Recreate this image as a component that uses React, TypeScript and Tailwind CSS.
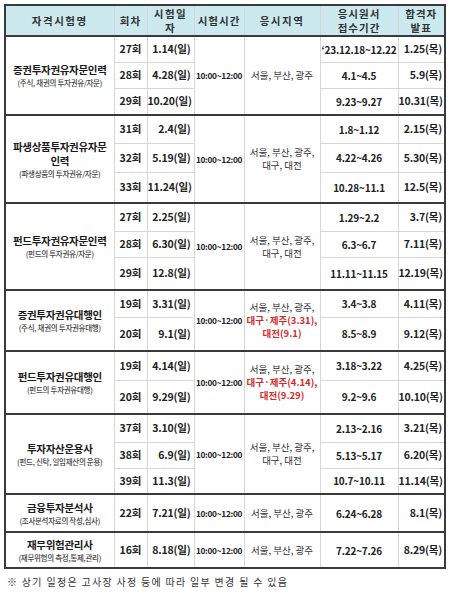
import React from "react";

type Row = { r: string; d: string; a: string; p: string; h: number };
type Group = {
  name: React.ReactNode;
  sub: string;
  region: React.ReactNode;
  rows: Row[];
};

const font = { fontFamily: '"Noto Sans CJK KR", "Noto Sans", sans-serif' };

const R3 = (
  <div className="leading-[13px]">
    <div>서울, 부산, 광주,</div>
    <div>대구, 대전</div>
  </div>
);
const R1 = <div className="leading-[13px]">서울, 부산, 광주</div>;

const redRegion = (a: string, b: string) => (
  <div className="leading-[13px]">
    <div>서울, 부산, 광주,</div>
    <div className="text-[#d42a2a] font-semibold">{a}</div>
    <div className="text-[#d42a2a] font-semibold">{b}</div>
  </div>
);

const groups: Group[] = [
  {
    name: "증권투자권유자문인력",
    sub: "(주식, 채권의 투자권유/자문)",
    region: R1,
    rows: [
      { r: "27회", d: "1.14(일)", a: "\u201823.12.18~12.22", p: "1.25(목)", h: 26 },
      { r: "28회", d: "4.28(일)", a: "4.1~4.5", p: "5.9(목)", h: 26 },
      { r: "29회", d: "10.20(일)", a: "9.23~9.27", p: "10.31(목)", h: 27 },
    ],
  },
  {
    name: (
      <>
        <div>파생상품투자권유자문</div>
        <div>인력</div>
      </>
    ),
    sub: "(파생상품의 투자권유/자문)",
    region: R3,
    rows: [
      { r: "31회", d: "2.4(일)", a: "1.8~1.12", p: "2.15(목)", h: 28 },
      { r: "32회", d: "5.19(일)", a: "4.22~4.26", p: "5.30(목)", h: 29 },
      { r: "33회", d: "11.24(일)", a: "10.28~11.1", p: "12.5(목)", h: 31 },
    ],
  },
  {
    name: "펀드투자권유자문인력",
    sub: "(펀드의 투자권유/자문)",
    region: R3,
    rows: [
      { r: "27회", d: "2.25(일)", a: "1.29~2.2", p: "3.7(목)", h: 28 },
      { r: "28회", d: "6.30(일)", a: "6.3~6.7", p: "7.11(목)", h: 26 },
      { r: "29회", d: "12.8(일)", a: "11.11~11.15", p: "12.19(목)", h: 33 },
    ],
  },
  {
    name: "증권투자권유대행인",
    sub: "(주식, 채권의 투자권유대행)",
    region: redRegion("대구·제주(3.31),", "대전(9.1)"),
    rows: [
      { r: "19회", d: "3.31(일)", a: "3.4~3.8", p: "4.11(목)", h: 27 },
      { r: "20회", d: "9.1(일)", a: "8.5~8.9", p: "9.12(목)", h: 34 },
    ],
  },
  {
    name: "펀드투자권유대행인",
    sub: "(펀드의 투자권유대행)",
    region: redRegion("대구·제주(4.14),", "대전(9.29)"),
    rows: [
      { r: "19회", d: "4.14(일)", a: "3.18~3.22", p: "4.25(목)", h: 29 },
      { r: "20회", d: "9.29(일)", a: "9.2~9.6", p: "10.10(목)", h: 34 },
    ],
  },
  {
    name: "투자자산운용사",
    sub: "(펀드, 신탁, 일임재산의 운용)",
    region: R3,
    rows: [
      { r: "37회", d: "3.10(일)", a: "2.13~2.16", p: "3.21(목)", h: 28 },
      { r: "38회", d: "6.9(일)", a: "5.13~5.17", p: "6.20(목)", h: 26 },
      { r: "39회", d: "11.3(일)", a: "10.7~10.11", p: "11.14(목)", h: 26 },
    ],
  },
  {
    name: "금융투자분석사",
    sub: "(조사분석자료의 작성,심사)",
    region: R1,
    rows: [{ r: "22회", d: "7.21(일)", a: "6.24~6.28", p: "8.1(목)", h: 38 }],
  },
  {
    name: "재무위험관리사",
    sub: "(재무위험의 측정,통제,관리)",
    region: R1,
    rows: [{ r: "16회", d: "8.18(일)", a: "7.22~7.26", p: "8.29(목)", h: 36 }],
  },
];

const cell = "border border-[#d6d6d6] p-0 align-middle";
const top = "border-t-2 border-t-[#3a3a3a]";
const th = `${cell} border-b-2 border-b-[#3a3a3a] font-semibold`;

export default function App() {
  return (
    <div className="w-[450px] h-[592px] bg-white pl-[4px] pt-[4px] text-[#222]" style={font}>
      <table className="table-fixed border-collapse border-2 border-[#3a3a3a] w-[440px]">
        <colgroup>
          <col style={{ width: 109 }} />
          <col style={{ width: 33 }} />
          <col style={{ width: 47 }} />
          <col style={{ width: 50 }} />
          <col style={{ width: 76 }} />
          <col style={{ width: 78 }} />
          <col style={{ width: 47 }} />
        </colgroup>
        <thead>
          <tr className="h-[31px] bg-[#cde9f0] text-[#333] font-semibold text-[10.5px] tracking-[1.5px]">
            <th className={th}>
              <div className="leading-[14px]">자격시험명</div>
            </th>
            <th className={th}>
              <div className="leading-[14px] tracking-[1px]">회차</div>
            </th>
            <th className={th}>
              <div className="leading-[14px]">시험일</div>
              <div className="leading-[14px]">자</div>
            </th>
            <th className={th}>
              <div className="leading-[14px] tracking-[1px]">시험시간</div>
            </th>
            <th className={th}>
              <div className="leading-[14px]">응시지역</div>
            </th>
            <th className={th}>
              <div className="leading-[14px] tracking-[1px]">응시원서</div>
              <div className="leading-[14px] tracking-[1px]">접수기간</div>
            </th>
            <th className={th}>
              <div className="leading-[14px] tracking-[1px]">합격자</div>
              <div className="leading-[14px] tracking-[1px]">발표</div>
            </th>
          </tr>
        </thead>
        <tbody>
          {groups.map((g, gi) =>
            g.rows.map((row, ri) => (
              <tr key={`${gi}-${ri}`} style={{ height: row.h }}>
                {ri === 0 && (
                  <td rowSpan={g.rows.length} className={`${cell} ${gi > 0 ? top : ""} text-center`}>
                    <div className="text-[10.5px] leading-[14px] font-bold tracking-[-0.3px] text-[#1a1a1a]">
                      {g.name}
                    </div>
                    <div className="text-[7.5px] leading-[10px] mt-[1px] text-[#444] font-medium tracking-[-0.3px]">
                      {g.sub}
                    </div>
                  </td>
                )}
                <td className={`${cell} ${ri === 0 && gi > 0 ? top : ""} text-center text-[10.5px] font-bold`}>
                  {row.r}
                </td>
                <td className={`${cell} ${ri === 0 && gi > 0 ? top : ""} text-right pr-[3px] text-[10.5px] font-bold tracking-[-0.2px]`}>
                  {row.d}
                </td>
                {ri === 0 && (
                  <td rowSpan={g.rows.length} className={`${cell} ${gi > 0 ? top : ""} text-center text-[8.3px] font-semibold tracking-[-0.3px]`}>
                    10:00~12:00
                  </td>
                )}
                {ri === 0 && (
                  <td rowSpan={g.rows.length} className={`${cell} ${gi > 0 ? top : ""} text-center text-[9.5px] text-[#333]`}>
                    {g.region}
                  </td>
                )}
                <td className={`${cell} ${ri === 0 && gi > 0 ? top : ""} text-center text-[10px] font-bold tracking-[-0.2px]`}>
                  {row.a}
                </td>
                <td className={`${cell} ${ri === 0 && gi > 0 ? top : ""} text-right pr-[2px] text-[10.5px] font-bold tracking-[-0.2px]`}>
                  {row.p}
                </td>
              </tr>
            ))
          )}
        </tbody>
      </table>
      <div className="mt-[6px] pl-[3px] text-[10px] leading-[14px] text-[#333] tracking-[1.3px] whitespace-pre">
        ※ 상기 일정은 고사장 사정 등에 따라 일부 변경 될 수 있음
      </div>
    </div>
  );
}
